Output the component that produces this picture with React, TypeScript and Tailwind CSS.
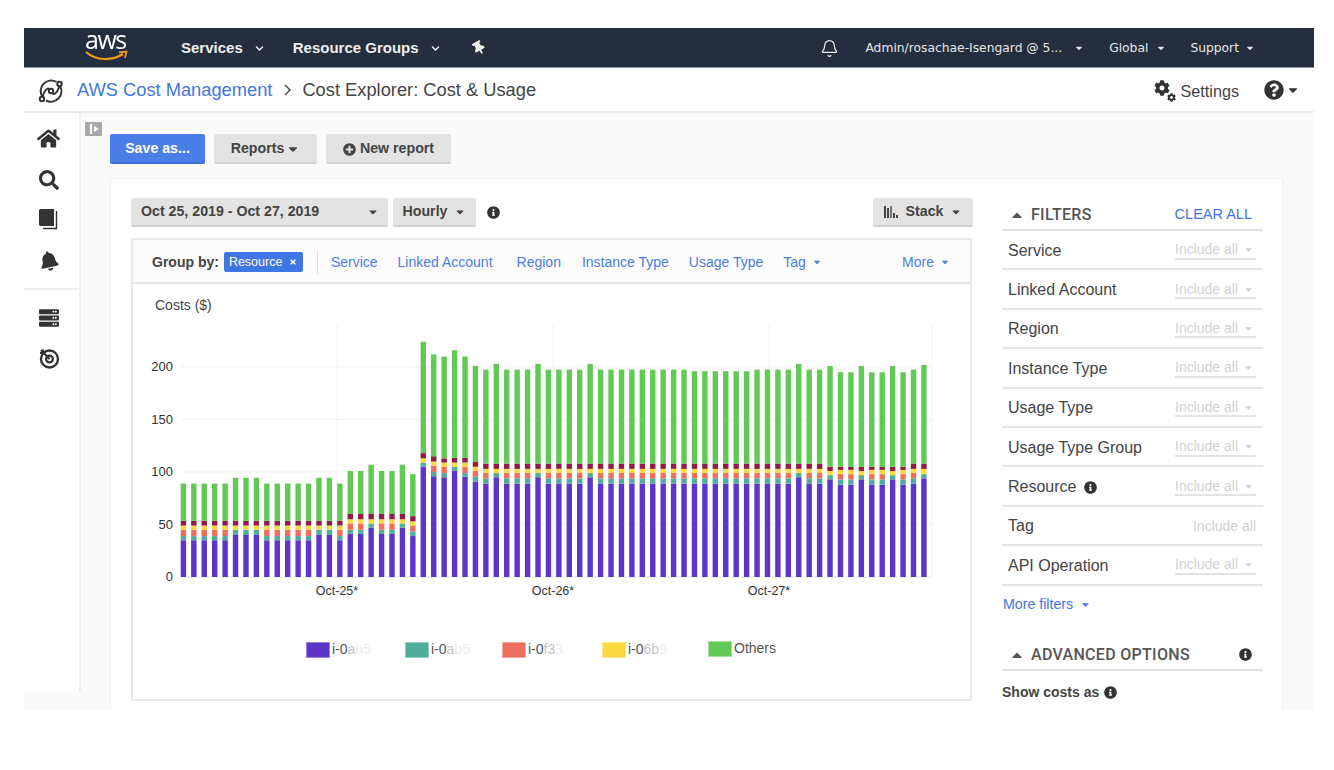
import React from "react";
import { FaHome, FaSearch, FaBell, FaServer, FaThumbtack, FaCog, FaQuestionCircle, FaInfoCircle, FaPlusCircle, FaCaretDown, FaCaretUp, FaTimes, FaChevronDown } from "react-icons/fa";
import { Bell } from "lucide-react";

const P = "#5c35c9", T = "#4fae9b", C = "#ee6f5d", Y = "#f9d93f", M = "#8f1d47", G = "#63c956";

// cumulative tops: [purple, teal, coral, yellow, maroon, total]
const A = [35, 39, 45, 49, 53.5, 89];
const B = [40, 45, 45, 49, 53.5, 94.5];
const E1 = [41, 45, 51, 55, 60, 101];
const E2 = [47, 51, 51, 55, 60, 107];
const Cc = [89, 94, 99, 103, 108, 197.5];
const Cl = [89, 94, 99, 103, 108, 196];
const D = [95, 99, 99, 103, 108, 203];
const H = [93, 97, 97, 101, 105, 201];
const F = [88, 93, 98, 102, 105, 195];
const rep = (v: number[], n: number) => Array.from({ length: n }, () => v);

const bars: number[][] = [
  ...rep(A, 5), ...rep(B, 3), ...rep(A, 5), ...rep(B, 2), A,
  E1, E1, E2, E1, E1, E2, [39, 43.5, 49, 53, 58, 98],
  [105, 109, 109, 113, 118, 224], [96, 100, 106, 110, 115, 212], [95, 99, 105, 109, 113, 210], [101, 105, 105, 109, 113.5, 216], [95.5, 99, 105, 109, 113.5, 210],
  [90.8, 95.5, 101, 105, 109.5, 201],
  Cc, D, ...rep(Cc, 3), D, ...rep(Cc, 4), D, ...rep(Cc, 9), ...rep(Cl, 6), ...rep(Cc, 4),
  D, Cc, Cc, H, F, F, H, F, F, H, F, Cc, [94, 98, 98, 103, 108, 202],
];

function Chart() {
  const y = (v: number) => 576 - v * 1.05;
  const ticks = [0, 50, 100, 150, 200];
  const cols = [P, T, C, Y, M, G];
  return (
    <svg width="841" height="280" viewBox="131 322 841 280" className="block" style={{ fontFamily: '"Liberation Sans", Arial, sans-serif' }}>
      {ticks.map((t) => (
        <g key={t}>
          <line x1="181" x2="932" y1={y(t)} y2={y(t)} stroke={t === 0 ? "#e6e6e6" : "#f3f3f3"} strokeWidth="1" />
          <text x="173" y={y(t) + 4} textAnchor="end" fontSize="13" fill="#333">{t}</text>
        </g>
      ))}
      {[337, 553, 769, 932].map((x) => (
        <line key={x} x1={x} x2={x} y1="324" y2="576" stroke="#f3f3f3" strokeWidth="1" />
      ))}
      {bars.map((b, i) => {
        const x = 180.7 + i * 10.43;
        let prev = 0;
        return (
          <g key={i}>
            {b.map((top, j) => {
              const r = <rect key={j} x={x} y={y(top)} width="5.4" height={Math.max(0, (top - prev) * 1.05)} fill={cols[j]} />;
              prev = top;
              return r;
            })}
          </g>
        );
      })}
      {[["Oct-25*", 337], ["Oct-26*", 553], ["Oct-27*", 769]].map(([t, x]) => (
        <text key={t as string} x={x as number} y="594" textAnchor="middle" fontSize="12.5" fill="#333">{t}</text>
      ))}
    </svg>
  );
}

function Legend({ color, label, mid, rest, w }: { color: string; label: string; mid?: string; rest?: string; w: string }) {
  return (
    <div className={`flex items-center gap-[2px] ${w}`}>
      <span className="w-[24px] h-[16px] border border-white/40" style={{ background: color }} />
      <span className="text-[14px] text-[#555] whitespace-nowrap">
        {label}
        <span className="text-[#c4c4c4]">{mid}</span>
        <span className="text-[#ececec]">{rest}</span>
      </span>
    </div>
  );
}

function Filter({ name, info, plain }: { name: string; info?: boolean; plain?: boolean }) {
  return (
    <div className="h-[39.4px] border-b-2 border-[#e3e6e6] flex items-center pt-[2px] pl-[6px] pr-[7px] justify-between">
      <span className="flex items-center gap-[8px] text-[16px] text-[#444]">
        {name}
        {info && <FaInfoCircle className="w-[13px] h-[13px] text-[#333]" />}
      </span>
      {plain ? (
        <span className="text-[14px] text-[#d2d2d2]">Include all</span>
      ) : (
        <span className="w-[81px] h-[18px] border-b-2 border-[#e3e3e3] flex items-center justify-between text-[14px] text-[#d2d2d2] pr-[2px]">
          Include all
          <FaCaretDown className="w-[11px] h-[11px] text-[#d0d0d0]" />
        </span>
      )}
    </div>
  );
}

function Gray({ children, className = "" }: { children: React.ReactNode; className?: string }) {
  return (
    <div className={`h-[29px] pt-[2px] bg-[#e3e3e3] rounded-[2px] border-b-2 border-[#cfd3d3] flex items-center text-[14.2px] font-bold text-[#444] ${className}`}>
      {children}
    </div>
  );
}

const Link = ({ children }: { children: React.ReactNode }) => <span className="text-[#4a7de6]">{children}</span>;

const headFont = { fontFamily: "Roboto, sans-serif" };

export default function App() {
  return (
    <div className="w-[1334px] h-[770px] bg-white pt-[28px] pl-[24px] overflow-hidden" style={{ fontFamily: '"Liberation Sans", Arial, sans-serif' }}>
      <div className="w-[1290px] h-[682px] flex flex-col blur-[0.4px]">
        {/* top nav */}
        <div className="h-[40px] shrink-0 bg-[#232f3e] border-b border-[#8a94a0] flex items-center text-white">
          <div className="relative w-[46px] ml-[61px] h-[40px] shrink-0">
            <span className="absolute left-0 top-[1px] text-[25px] tracking-[-1.5px] leading-[20px] text-white" style={{ fontFamily: '"Open Sans", sans-serif' }}>aws</span>
            <svg className="absolute left-0 top-[22px]" width="44" height="12" viewBox="0 0 44 12">
              <path d="M1 2 C 11 11, 27 11, 38 4" stroke="#f29a1f" strokeWidth="2.2" fill="none" />
              <path d="M34 2.5 L41.5 1.5 L40 8" stroke="#f29a1f" strokeWidth="1.8" fill="none" />
            </svg>
          </div>
          <span className="ml-[50px] mt-[1px] text-[15px] font-bold text-[#eee]">Services</span>
          <FaChevronDown className="ml-[12px] mt-[2px] w-[9px] h-[9px] text-[#eee]" />
          <span className="ml-[29px] mt-[1px] text-[15px] font-bold text-[#eee]">Resource Groups</span>
          <FaChevronDown className="ml-[12px] mt-[2px] w-[9px] h-[9px] text-[#eee]" />
          <FaThumbtack className="ml-[32px] w-[14px] h-[14px] text-[#eee] -rotate-30" />
          <Bell className="ml-auto mt-[1px] w-[19px] h-[19px] text-[#eee]" strokeWidth={1.5} />
          <div className="flex items-center mt-[1px] text-[12.3px] text-[#e6e6e6]" style={{ fontFamily: '"DejaVu Sans", sans-serif' }}>
            <span className="ml-[26px]">Admin/rosachae-Isengard @ 5...</span>
            <FaCaretDown className="ml-[12px] w-[10px] h-[10px]" />
            <span className="ml-[25px]">Global</span>
            <FaCaretDown className="ml-[8px] w-[10px] h-[10px]" />
            <span className="ml-[24px]">Support</span>
            <FaCaretDown className="ml-[6px] w-[10px] h-[10px] mr-[59px]" />
          </div>
        </div>

        {/* breadcrumb */}
        <div className="h-[45px] shrink-0 bg-white border-b-2 border-[#ececec] flex items-center">
          <svg className="ml-[14px] mt-[2px]" width="26" height="26" viewBox="0 0 26 26" fill="none" stroke="#333" strokeWidth="2">
            <path d="M4.5 19 A10.5 10.5 0 0 1 18.5 4" />
            <path d="M22 8 A10.5 10.5 0 0 1 8 22.5" />
            <path d="M4 21 C 7 9, 11 9, 13 13 C 15 18, 19 17, 22 6" />
            <circle cx="4" cy="21" r="2.2" fill="#fff" />
            <circle cx="21.5" cy="6" r="2.2" fill="#fff" />
            <circle cx="13" cy="13" r="2.2" fill="#fff" />
          </svg>
          <span className="ml-[13px] mt-[1px] text-[18.3px] text-[#3f76e4]">AWS Cost Management</span>
          <svg className="ml-[11px] mt-[1px]" width="9" height="12" viewBox="0 0 9 12" fill="none" stroke="#444" strokeWidth="1.4"><path d="M2 1 L7 6 L2 11" /></svg>
          <span className="ml-[10px] mt-[1px] text-[18.3px] text-[#444]">Cost Explorer: Cost &amp; Usage</span>
          <span className="ml-auto mt-[2px] relative w-[22px] h-[22px]">
            <FaCog className="w-[16px] h-[16px] text-[#333]" />
            <FaCog className="absolute right-0 bottom-0 w-[9px] h-[9px] text-[#333]" />
          </span>
          <span className="ml-[5px] mt-[3px] text-[16.2px] text-[#444]">Settings</span>
          <FaQuestionCircle className="ml-[25px] w-[20px] h-[20px] text-[#333]" />
          <FaCaretDown className="ml-[2px] mr-[14px] w-[14px] h-[14px] text-[#333]" />
        </div>

        <div className="flex flex-1 min-h-0 overflow-hidden bg-[#fafafa]">
          {/* sidebar */}
          <div className="w-[57px] shrink-0 h-[579px] bg-white border-r-2 border-[#eeeeee] flex flex-col items-center pr-[6px]">
            <FaHome className="mt-[14px] w-[23px] h-[23px] text-[#333]" />
            <FaSearch className="mt-[20px] w-[20px] h-[20px] text-[#333]" />
            <svg className="mt-[19px]" width="19" height="21" viewBox="0 0 19 21">
              <path d="M1.5 0 H15 V17 H2.5 A2 2 0 0 1 0 15 V1.5 A1.5 1.5 0 0 1 1.5 0 Z" fill="#333" />
              <path d="M17.5 2 V19.5 H4" stroke="#333" strokeWidth="1.4" fill="none" />
            </svg>
            <FaBell className="mt-[21px] w-[20px] h-[20px] text-[#333] -rotate-12" />
            <div className="w-[56px] h-[2px] bg-[#eeeeee] mt-[17px] ml-[6px]" />
            <FaServer className="mt-[18px] w-[20px] h-[20px] text-[#333]" />
            <svg className="mt-[19px]" width="22" height="22" viewBox="0 0 22 22" fill="none" stroke="#333">
              <circle cx="11.5" cy="12" r="8.5" strokeWidth="2.4" />
              <circle cx="11.5" cy="12" r="3.4" strokeWidth="2.2" />
              <path d="M11.5 12 L3 3" strokeWidth="2.2" />
              <path d="M2 6 L5 6 L5 2.5" strokeWidth="2" />
            </svg>
          </div>

          {/* main */}
          <div className="flex-1 relative pl-[29px] pt-[21px] pr-[31px] min-w-0">
            <div className="absolute left-[4px] top-[9px] w-[17px] h-[14px] bg-[#a8a8a8] rounded-[1px] flex items-center">
              <span className="w-[1.5px] h-[10px] bg-white ml-[5px]" />
              <span className="ml-[2px] w-0 h-0 border-y-[3.5px] border-y-transparent border-l-[5px] border-l-white" />
            </div>

            <div className="flex gap-[9px] h-[30px]">
              <div className="w-[95px] h-[30px] pt-[2px] bg-[#4a7de6] rounded-[2px] border-b-2 border-[#3f6fd0] flex items-center justify-center text-white text-[14.2px] font-bold">Save as...</div>
              <Gray className="w-[103px] !h-[30px] justify-center gap-[2px]">Reports <FaCaretDown className="w-[14px] h-[14px]" /></Gray>
              <Gray className="w-[125px] !h-[30px] justify-center gap-[4px]"><FaPlusCircle className="w-[13px] h-[13px]" /> New report</Gray>
            </div>

            <div className="mt-[14px] h-[540px] bg-white border border-[#f1f1f1] flex pl-[20px] pt-[18px]">
              {/* left column */}
              <div className="w-[841px] shrink-0">
                <div className="flex items-center h-[30px]">
                  <Gray className="w-[257px] pl-[10px] pr-[9px] justify-between">
                    <span>Oct 25, 2019 - Oct 27, 2019</span>
                    <FaCaretDown className="w-[12px] h-[12px] text-[#444]" />
                  </Gray>
                  <Gray className="ml-[5px] w-[83px] justify-center gap-[7px]">Hourly <FaCaretDown className="w-[12px] h-[12px]" /></Gray>
                  <FaInfoCircle className="ml-[11px] w-[13px] h-[13px] text-[#333]" />
                  <Gray className="ml-auto -mr-[1px] w-[100px] justify-center gap-[6px]">
                    <svg width="16" height="12" viewBox="0 0 16 12" fill="#444">
                      <rect x="0" y="0" width="2" height="12" /><rect x="3" y="2" width="2" height="10" /><rect x="6" y="0" width="2" height="12" opacity=".7" /><rect x="9" y="7" width="2" height="5" /><rect x="12" y="9" width="2" height="3" />
                    </svg>
                    Stack <FaCaretDown className="w-[12px] h-[12px] ml-[1px]" />
                  </Gray>
                </div>

                <div className="mt-[11px] h-[463px] border-2 border-[#e6e9e9] rounded-[1px] flex flex-col">
                  <div className="h-[44px] shrink-0 bg-[#fcfcfc] border-b-2 border-[#e6e9e9] flex items-center text-[14px] pl-[19px] pr-[20px] pt-[2px]">
                    <span className="font-bold text-[#444]">Group by:</span>
                    <span className="ml-[5px] h-[20px] w-[79px] bg-[#3f76e4] rounded-[2px] text-white text-[12.5px] flex items-center pl-[5px] gap-[7px]">Resource <FaTimes className="w-[8px] h-[8px]" /></span>
                    <span className="ml-[14px] w-px h-[24px] bg-[#dfdfdf]" />
                    <span className="ml-[13px]"><Link>Service</Link></span>
                    <span className="ml-[20px]"><Link>Linked Account</Link></span>
                    <span className="ml-[24px]"><Link>Region</Link></span>
                    <span className="ml-[21px]"><Link>Instance Type</Link></span>
                    <span className="ml-[20px]"><Link>Usage Type</Link></span>
                    <span className="ml-[20px] flex items-center gap-[6px]"><Link>Tag</Link><FaCaretDown className="w-[10px] h-[10px] text-[#4a7de6]" /></span>
                    <span className="ml-auto flex items-center gap-[6px]"><Link>More</Link><FaCaretDown className="w-[10px] h-[10px] text-[#4a7de6]" /></span>
                  </div>
                  <div className="pl-[22px] pt-[13px] text-[14px] text-[#444] leading-[16px]">Costs ($)</div>
                  <div className="-ml-[2px] mt-[10px]">
                    <Chart />
                  </div>
                  <div className="pl-[173px] flex items-center mt-[36px]">
                    <Legend color={P} label="i-0" mid="a" rest="b5" w="w-[99px]" />
                    <Legend color={T} label="i-0" mid="a" rest="b5" w="w-[97px]" />
                    <Legend color={C} label="i-0" mid="f3" rest="3" w="w-[100px]" />
                    <Legend color={Y} label="i-0" mid="6b" rest="9" w="w-[106px]" />
                    <div className="-mt-[2px]"><Legend color={G} label="Others" w="w-[80px]" /></div>
                  </div>
                </div>
              </div>

              {/* filters */}
              <div className="ml-[30px] w-[261px] shrink-0">
                <div className="h-[34px] pt-[3px] border-b-2 border-[#dde1e1] flex items-center pl-[7px] pr-[11px]">
                  <FaCaretUp className="w-[16px] h-[16px] text-[#555]" />
                  <span className="ml-[6px] text-[16px] tracking-[0.3px] text-[#555] font-medium" style={headFont}>FILTERS</span>
                  <span className="ml-auto text-[14.5px] text-[#3f76e4]">CLEAR ALL</span>
                </div>
                <div>
                  {["Service", "Linked Account", "Region", "Instance Type", "Usage Type", "Usage Type Group"].map((n) => <Filter key={n} name={n} />)}
                  <Filter name="Resource" info />
                  <Filter name="Tag" plain />
                  <Filter name="API Operation" />
                </div>
                <div className="mt-[8px] flex items-center gap-[7px] text-[14.2px] text-[#3f76e4]">
                  <span className="ml-px">More filters</span>
                  <FaCaretDown className="w-[11px] h-[11px]" />
                </div>
                <div className="mt-[23px] h-[33px] pt-[3px] border-b-2 border-[#dde1e1] flex items-center pl-[7px] pr-[11px]">
                  <FaCaretUp className="w-[16px] h-[16px] text-[#555]" />
                  <span className="ml-[6px] text-[16px] tracking-[0.3px] text-[#555] font-medium" style={headFont}>ADVANCED OPTIONS</span>
                  <FaInfoCircle className="ml-auto w-[13px] h-[13px] text-[#333]" />
                </div>
                <div className="mt-[11px] flex items-center gap-[5px] text-[14px] font-bold text-[#444]">
                  Show costs as <FaInfoCircle className="w-[13px] h-[13px] text-[#333]" />
                </div>
                <div className="mt-[7px] w-[181px] h-[2px] bg-[#e3e3e3]" />
              </div>
            </div>
          </div>
        </div>
      </div>
    </div>
  );
}
